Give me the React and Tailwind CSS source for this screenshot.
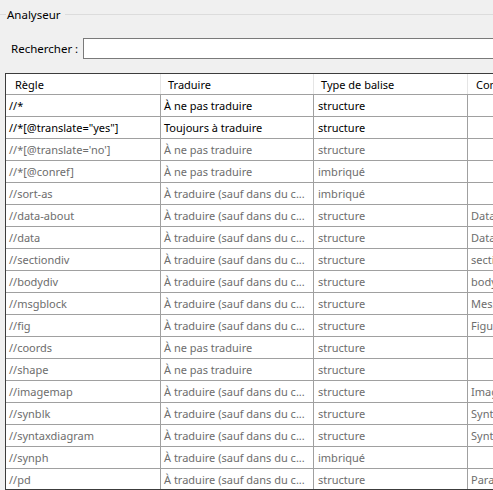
import React from 'react';

const rows = [
  { rule: '//*', trad: 'À ne pas traduire', type: 'structure', comment: '', strong: true },
  { rule: '//*[@translate="yes"]', trad: 'Toujours à traduire', type: 'structure', comment: '', strong: true },
  { rule: "//*[@translate='no']", trad: 'À ne pas traduire', type: 'structure', comment: '' },
  { rule: '//*[@conref]', trad: 'À ne pas traduire', type: 'imbriqué', comment: '' },
  { rule: '//sort-as', trad: 'À traduire (sauf dans du c...', type: 'imbriqué', comment: '' },
  { rule: '//data-about', trad: 'À traduire (sauf dans du c...', type: 'structure', comment: 'Data about' },
  { rule: '//data', trad: 'À traduire (sauf dans du c...', type: 'structure', comment: 'Data' },
  { rule: '//sectiondiv', trad: 'À traduire (sauf dans du c...', type: 'structure', comment: 'section div' },
  { rule: '//bodydiv', trad: 'À traduire (sauf dans du c...', type: 'structure', comment: 'body div' },
  { rule: '//msgblock', trad: 'À traduire (sauf dans du c...', type: 'structure', comment: 'Message block' },
  { rule: '//fig', trad: 'À traduire (sauf dans du c...', type: 'structure', comment: 'Figure' },
  { rule: '//coords', trad: 'À ne pas traduire', type: 'structure', comment: '' },
  { rule: '//shape', trad: 'À ne pas traduire', type: 'structure', comment: '' },
  { rule: '//imagemap', trad: 'À traduire (sauf dans du c...', type: 'structure', comment: 'Image map' },
  { rule: '//synblk', trad: 'À traduire (sauf dans du c...', type: 'structure', comment: 'Syntax block' },
  { rule: '//syntaxdiagram', trad: 'À traduire (sauf dans du c...', type: 'structure', comment: 'Syntax diagram' },
  { rule: '//synph', trad: 'À traduire (sauf dans du c...', type: 'imbriqué', comment: '' },
  { rule: '//pd', trad: 'À traduire (sauf dans du c...', type: 'structure', comment: 'Paragraph' },
];

const font = { fontFamily: '"Noto Sans", "Open Sans", sans-serif' };

export default function App() {
  return (
    <div
      className="w-[493px] h-[490px] overflow-hidden bg-[#f0f0f0] text-[11px] leading-none text-black"
      style={font}
    >
      {/* group box title */}
      <div className="flex items-center h-[28px] pt-[1px]">
        <div className="w-[6px] h-px bg-[#dcdcdc]" />
        <span className="px-[1px] text-[11.5px] whitespace-nowrap">Analyseur</span>
        <div className="flex-1 h-px bg-[#dcdcdc] ml-[3px]" />
      </div>

      {/* search row */}
      <div className="flex items-center mt-[10px] h-[21px]">
        <span className="ml-[11px] w-[72px] shrink-0 whitespace-nowrap text-[11.5px]">Rechercher :</span>
        <div className="w-[500px] shrink-0 h-[21px] bg-white border border-[#7a7a7a]" />
      </div>

      {/* table */}
      <div className="mt-[14px] ml-[5px] w-[600px] h-[417px] overflow-hidden bg-white border border-[#3c3c3c]">
        <div className="flex h-[21px] border-b border-[#a0a0a0] items-center">
          <div className="w-[155px] shrink-0 pl-[9px] border-r border-[#e5e5e5] h-full flex items-center">Règle</div>
          <div className="w-[153px] shrink-0 pl-[7px] border-r border-[#e5e5e5] h-full flex items-center">Traduire</div>
          <div className="w-[154px] shrink-0 pl-[7px] border-r border-[#e5e5e5] h-full flex items-center">Type de balise</div>
          <div className="flex-1 pl-[8px] h-full flex items-center whitespace-nowrap">Commentaire</div>
        </div>
        {rows.map((r, i) => (
          <div
            key={i}
            className={`flex h-[22px] border-b border-[#a0a0a0] ${r.strong ? 'text-black' : 'text-[#6d6d6d]'}`}
          >
            <div className="w-[155px] shrink-0 pl-[3px] border-r border-[#a0a0a0] flex items-center whitespace-nowrap overflow-hidden">{r.rule}</div>
            <div className="w-[153px] shrink-0 pl-[3px] border-r border-[#a0a0a0] flex items-center whitespace-nowrap overflow-hidden">{r.trad}</div>
            <div className="w-[154px] shrink-0 pl-[4px] border-r border-[#a0a0a0] flex items-center whitespace-nowrap overflow-hidden">{r.type}</div>
            <div className="flex-1 pl-[3px] flex items-center whitespace-nowrap overflow-hidden">{r.comment}</div>
          </div>
        ))}
      </div>
    </div>
  );
}
